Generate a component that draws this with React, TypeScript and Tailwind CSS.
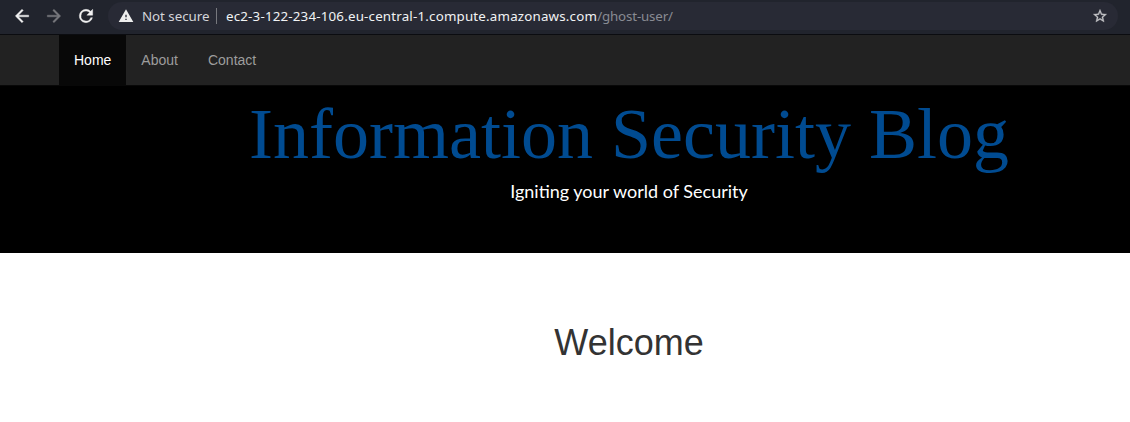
const navItems = ["Home", "About", "Contact"];

function BrowserBar() {
  return (
    <div className="flex h-[35px] w-[1130px] items-start border-b border-[#0b0c10] bg-[#21242d] pl-[12px] pt-[2px] font-['Noto_Sans',sans-serif]">
      <div className="flex h-[28px] items-center">
        <svg className="h-5 w-5" viewBox="0 0 24 24" fill="#f1f1f1" stroke="#f1f1f1" strokeWidth="0.5">
          <path d="M20 11H7.83l5.59-5.59L12 4l-8 8 8 8 1.41-1.41L7.83 13H20v-2z" />
        </svg>
        <svg className="ml-[12px] h-5 w-5" viewBox="0 0 24 24" fill="#77787d" stroke="#77787d" strokeWidth="0.5">
          <path d="M12 4l-1.41 1.41L16.17 11H4v2h12.17l-5.58 5.59L12 20l8-8z" />
        </svg>
        <svg className="ml-[12px] h-5 w-5" viewBox="0 0 24 24" fill="#f1f1f1" stroke="#f1f1f1" strokeWidth="0.5">
          <path d="M17.65 6.35A7.96 7.96 0 0 0 12 4a8 8 0 1 0 7.73 10h-2.08A6 6 0 1 1 12 6c1.66 0 3.14.69 4.22 1.78L13 11h7V4l-2.35 2.35z" />
        </svg>
      </div>
      <div className="ml-[12px] flex h-[28px] w-[1010px] items-center rounded-full bg-[#282a35] pl-[10px] pr-[10px] text-[13.33px] leading-7 text-[#f1f3f4]">
        <svg className="h-4 w-4" viewBox="0 0 24 24" fill="#eeeeee">
          <path d="M1 21h22L12 2 1 21zm12-3h-2v-2h2v2zm0-4h-2v-4h2v4z" />
        </svg>
        <span className="ml-[8px] w-[68px] whitespace-nowrap tracking-[-0.04px] text-[#d4d5d9]">Not secure</span>
        <span className="ml-[6px] h-4 w-px bg-[#77787e]" />
        <span className="ml-[9px] whitespace-nowrap tracking-[0.19px]">
          ec2-3-122-234-106.eu-central-1.compute.amazonaws.com
          <span className="tracking-[-0.15px] text-[#888b93]">/ghost-user/</span>
        </span>
        <svg className="ml-auto h-4 w-4" viewBox="0 0 24 24" fill="#c5c6c9" stroke="#c5c6c9" strokeWidth="0.5">
          <path d="M22 9.24l-7.19-.62L12 2 9.19 8.63 2 9.24l5.46 4.73L5.82 21 12 17.27 18.18 21l-1.63-7.03L22 9.24zM12 15.4l-3.76 2.27 1-4.28-3.32-2.88 4.38-.38L12 6.1l1.71 4.04 4.38.38-3.32 2.88 1 4.28L12 15.4z" />
        </svg>
      </div>
    </div>
  );
}

export default function App() {
  return (
    <div className="h-[422px] w-full overflow-hidden bg-white font-['Liberation_Sans',Arial,sans-serif]">
      <BrowserBar />
      <div className="w-[1258px]">
        <nav className="flex h-[51px] border-b border-[#080808] bg-[#222222] pl-[59px] text-[14px] leading-5">
          {navItems.map((item) => (
            <a
              key={item}
              className={
                item === "Home"
                  ? "h-[50px] bg-[#080808] px-[15px] py-[15px] text-white"
                  : "h-[50px] px-[15px] py-[15px] text-[#9d9d9d]"
              }
            >
              {item}
            </a>
          ))}
        </nav>
        <header className="h-[167px] bg-black text-center">
          <h1 className="pt-[9px] font-['Liberation_Serif','Times_New_Roman',serif] text-[72px] leading-[79px] text-[#004b91]">
            Information Security Blog
          </h1>
          <p className="mt-1 font-[Lato,sans-serif] text-[18px] leading-[26px] text-white">
            Igniting your world of Security
          </p>
        </header>
        <main className="pt-[70px] text-center">
          <h2 className="text-[36px] leading-[40px] text-[#333333]">Welcome</h2>
        </main>
      </div>
    </div>
  );
}
